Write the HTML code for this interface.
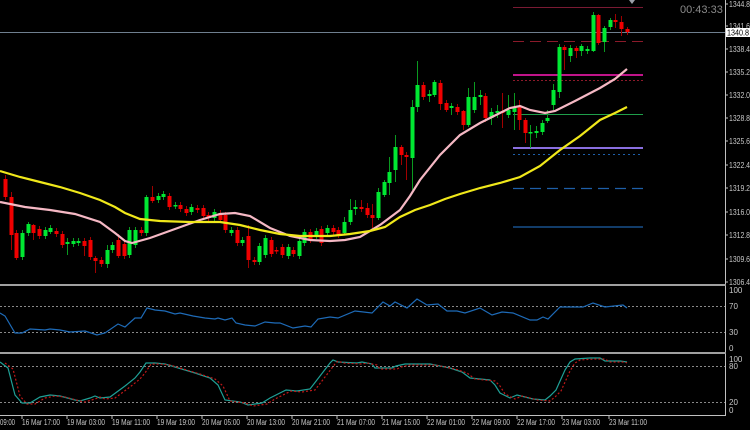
<!DOCTYPE html>
<html><head><meta charset="utf-8"><style>
html,body{margin:0;padding:0;background:#000;}
svg{display:block;font-family:"Liberation Sans",sans-serif;}
</style></head><body>
<svg id="s" width="750" height="430" viewBox="0 0 750 430" xmlns="http://www.w3.org/2000/svg">
<rect width="750" height="430" fill="#000"/>
<line x1="0" y1="32.5" x2="725" y2="32.5" stroke="#6f7f8f" stroke-width="1"/>
<line x1="513" y1="7.5" x2="643" y2="7.5" stroke="#7a1a33" stroke-width="1"/>
<line x1="513" y1="41.5" x2="643" y2="41.5" stroke="#8b1a2a" stroke-width="1" stroke-dasharray="11,6"/>
<line x1="513" y1="75" x2="643" y2="75" stroke="#c0148a" stroke-width="2"/>
<line x1="513" y1="80.5" x2="643" y2="80.5" stroke="#8b1a2a" stroke-width="1" stroke-dasharray="2,2"/>
<line x1="513" y1="114.5" x2="643" y2="114.5" stroke="#1f9e4a" stroke-width="1"/>
<line x1="513" y1="148" x2="643" y2="148" stroke="#8a6fe0" stroke-width="2"/>
<line x1="513" y1="154.5" x2="643" y2="154.5" stroke="#1e5fa8" stroke-width="1" stroke-dasharray="2,3"/>
<line x1="513" y1="188.5" x2="643" y2="188.5" stroke="#1e5fa8" stroke-width="1.3" stroke-dasharray="11,6"/>
<line x1="513" y1="227" x2="643" y2="227" stroke="#1e5fa8" stroke-width="1.3"/>
<g id="candles"></g>
<polyline fill="none" stroke="#f5b8c4" stroke-width="2.2" points="0,202 25,207 50,210 75,214 100,222 115,233 125,241 132,243 150,238 175,229 200,220 220,214 235,213 250,216 270,228 290,236 310,240 330,241 345,240 360,237 380,225 400,210 410,196 420,180 440,155 460,135 480,123 500,113 510,108 520,106 530,110 545,113 555,111 575,101 600,88 615,79 627,69"/>
<polyline fill="none" stroke="#f0e81a" stroke-width="2.2" points="0,171 20,177 40,182 60,187 80,193 100,200 115,207 125,213 140,219 160,221 190,222 220,222 240,225 260,230 280,234 300,236 330,236 350,234 370,231 385,227 400,217 415,210 430,205 445,199 460,194 480,188 500,183 520,177 540,166 560,150 580,136 600,120 615,113 627,107"/>
<line x1="725.5" y1="0" x2="725.5" y2="415" stroke="#c0c0c0" stroke-width="1"/>
<g fill="#c8c8c8" font-size="8" lengthAdjust="spacingAndGlyphs">
<text x="729" y="7" textLength="21" lengthAdjust="spacingAndGlyphs">1344.8</text>
<text x="729" y="29" textLength="21" lengthAdjust="spacingAndGlyphs">1341.6</text>
<text x="729" y="52" textLength="21" lengthAdjust="spacingAndGlyphs">1338.4</text>
<text x="729" y="75" textLength="21" lengthAdjust="spacingAndGlyphs">1335.2</text>
<text x="729" y="98" textLength="21" lengthAdjust="spacingAndGlyphs">1332.0</text>
<text x="729" y="121" textLength="21" lengthAdjust="spacingAndGlyphs">1328.8</text>
<text x="729" y="144" textLength="21" lengthAdjust="spacingAndGlyphs">1325.6</text>
<text x="729" y="168" textLength="21" lengthAdjust="spacingAndGlyphs">1322.4</text>
<text x="729" y="191" textLength="21" lengthAdjust="spacingAndGlyphs">1319.2</text>
<text x="729" y="215" textLength="21" lengthAdjust="spacingAndGlyphs">1316.0</text>
<text x="729" y="238" textLength="21" lengthAdjust="spacingAndGlyphs">1312.8</text>
<text x="729" y="262" textLength="21" lengthAdjust="spacingAndGlyphs">1309.6</text>
<text x="729" y="285" textLength="21" lengthAdjust="spacingAndGlyphs">1306.4</text>
</g>
<rect x="726" y="28" width="24" height="9" fill="#fff"/>
<text x="727" y="35.5" font-size="8" fill="#000" textLength="22" lengthAdjust="spacingAndGlyphs">1340.8</text>
<g stroke="#c0c0c0"><line x1="725" y1="4" x2="728" y2="4"/><line x1="725" y1="26" x2="728" y2="26"/><line x1="725" y1="49" x2="728" y2="49"/><line x1="725" y1="72" x2="728" y2="72"/><line x1="725" y1="95" x2="728" y2="95"/><line x1="725" y1="118" x2="728" y2="118"/><line x1="725" y1="141" x2="728" y2="141"/><line x1="725" y1="165" x2="728" y2="165"/><line x1="725" y1="188" x2="728" y2="188"/><line x1="725" y1="212" x2="728" y2="212"/><line x1="725" y1="235" x2="728" y2="235"/><line x1="725" y1="259" x2="728" y2="259"/><line x1="725" y1="282" x2="728" y2="282"/></g>
<text x="680" y="13" font-size="11" fill="#8a8a8a">00:43:33</text>
<polygon points="629,0 635,0 632,4" fill="#9aa0a8"/>
<rect x="0" y="284" width="726" height="2" fill="#a0a0a0"/>
<rect x="0" y="352" width="726" height="2" fill="#a0a0a0"/>
<line x1="0" y1="415.5" x2="726" y2="415.5" stroke="#c0c0c0"/>
<g stroke="#888" stroke-width="1" stroke-dasharray="2,2">
<line x1="0" y1="306.5" x2="725" y2="306.5"/><line x1="0" y1="332.5" x2="725" y2="332.5"/>
<line x1="0" y1="366.5" x2="725" y2="366.5"/><line x1="0" y1="402.5" x2="725" y2="402.5"/>
</g>
<polyline fill="none" stroke="#1e6bb8" stroke-width="1.2" points="0,313 5,316 15,333 22,333 30,329 45,330 50,329 60,330 70,332 85,331 97,335 105,333 118,324 125,327 135,318 141,318 147,308 155,310 165,311 175,314 180,313 193,316 205,318 215,319 218,318 225,320 232,318 236,323 245,325 255,326 265,322 275,323 280,323 293,328 305,326 311,327 318,319 330,317 338,318 355,311 372,313 383,302 390,306 395,302 407,308 417,299 427,305 438,304 447,311 457,311 465,313 480,308 492,315 502,312 513,313 530,320 537,320 543,317 548,319 560,307 583,307 593,303 605,307 623,305 627,308"/>
<g fill="#c8c8c8" font-size="8">
<text x="729" y="293">100</text><text x="729" y="309">70</text><text x="729" y="335">30</text><text x="729" y="351">0</text>
<text x="729" y="362">100</text><text x="729" y="369">80</text><text x="729" y="405">20</text><text x="729" y="413">0</text>
</g>
<polyline fill="none" stroke="#1fa096" stroke-width="1.2" points="0,362 8,368 15,395 22,403 30,403 40,397 50,395 60,396 75,400 80,401 90,398 95,396 100,398 110,397 125,386 135,378 140,372 146,363 155,363 165,364 185,370 195,373 210,378 218,385 225,400 240,402 248,405 255,404 262,403 270,398 286,390 297,391 310,389 330,363 333,360 338,362 357,363 362,362 372,364 375,368 392,368 396,366 405,364 430,364 450,368 462,372 470,378 490,380 495,385 500,393 510,398 517,395 533,399 545,400 550,396 556,390 565,370 570,362 575,359 590,358 600,358 605,361 620,361 627,362"/>
<polyline fill="none" stroke="#c01818" stroke-width="1.2" stroke-dasharray="2,2" transform="translate(5,1)" points="0,362 8,368 15,395 22,403 30,403 40,397 50,395 60,396 75,400 80,401 90,398 95,396 100,398 110,397 125,386 135,378 140,372 146,363 155,363 165,364 185,370 195,373 210,378 218,385 225,400 240,402 248,405 255,404 262,403 270,398 286,390 297,391 310,389 330,363 333,360 338,362 357,363 362,362 372,364 375,368 392,368 396,366 405,364 430,364 450,368 462,372 470,378 490,380 495,385 500,393 510,398 517,395 533,399 545,400 550,396 556,390 565,370 570,362 575,359 590,358 600,358 605,361 620,361 622,362"/>
<g stroke="#c0c0c0"><line x1="22" y1="415" x2="22" y2="419"/><line x1="67" y1="415" x2="67" y2="419"/><line x1="112" y1="415" x2="112" y2="419"/><line x1="157" y1="415" x2="157" y2="419"/><line x1="202" y1="415" x2="202" y2="419"/><line x1="247" y1="415" x2="247" y2="419"/><line x1="292" y1="415" x2="292" y2="419"/><line x1="337" y1="415" x2="337" y2="419"/><line x1="382" y1="415" x2="382" y2="419"/><line x1="427" y1="415" x2="427" y2="419"/><line x1="472" y1="415" x2="472" y2="419"/><line x1="517" y1="415" x2="517" y2="419"/><line x1="562" y1="415" x2="562" y2="419"/><line x1="609" y1="415" x2="609" y2="419"/></g>
<g fill="#c8c8c8" font-size="8">
<text x="0" y="425" textLength="15" lengthAdjust="spacingAndGlyphs">09:00</text>
<text x="22" y="425" textLength="38" lengthAdjust="spacingAndGlyphs">16 Mar 17:00</text><text x="67" y="425" textLength="38" lengthAdjust="spacingAndGlyphs">19 Mar 03:00</text><text x="112" y="425" textLength="38" lengthAdjust="spacingAndGlyphs">19 Mar 11:00</text><text x="157" y="425" textLength="38" lengthAdjust="spacingAndGlyphs">19 Mar 19:00</text><text x="202" y="425" textLength="38" lengthAdjust="spacingAndGlyphs">20 Mar 05:00</text><text x="247" y="425" textLength="38" lengthAdjust="spacingAndGlyphs">20 Mar 13:00</text><text x="292" y="425" textLength="38" lengthAdjust="spacingAndGlyphs">20 Mar 21:00</text><text x="337" y="425" textLength="38" lengthAdjust="spacingAndGlyphs">21 Mar 07:00</text><text x="382" y="425" textLength="38" lengthAdjust="spacingAndGlyphs">21 Mar 15:00</text><text x="427" y="425" textLength="38" lengthAdjust="spacingAndGlyphs">22 Mar 01:00</text><text x="472" y="425" textLength="38" lengthAdjust="spacingAndGlyphs">22 Mar 09:00</text><text x="517" y="425" textLength="38" lengthAdjust="spacingAndGlyphs">22 Mar 17:00</text><text x="562" y="425" textLength="38" lengthAdjust="spacingAndGlyphs">23 Mar 03:00</text><text x="609" y="425" textLength="38" lengthAdjust="spacingAndGlyphs">23 Mar 11:00</text>
</g>
</svg>
<script>
var d=[
["r",179,197,175,200],["r",197,235,192,250],["r",233,258,230,260],["g",233,257,230,260],["g",224,233,222,236],["r",225,233,224,240],["r",229,236],["g",230,236],["g",228,232,225,234],["r",231,234],
["r",234,245],["g",242,244,238,255],["g",241,244],["g",241,243],["r",241,246,238,256],["r",240,257],["r",258,261,256,273],["r",260,264],["g",250,264,245,268],["g",245,250],
["r",240,256,234,258],["r",244,256],["g",230,255],["g",230,245],["r",230,233],["g",197,233,195,236],["r",197,201,186,203],["g",196,200],["g",194,197],["r",196,207],
["g",205,206],["r",205,209],["r",209,213],["g",207,212],["r",208,210],["r",208,216],["r",215,218],["g",212,218],["r",213,220],["r",215,230],
["g",230,233],["r",230,243],["g",240,243],["r",236,260,225,268],["r",260,262],["g",246,262],["g",238,255],["r",240,254],["r",250,251],["r",247,255],
["g",247,256],["r",250,254],["g",241,256],["g",232,243],["r",232,240],["g",231,236],["r",229,243],["g",228,233],["r",228,232],["r",230,235],
["g",222,233,217,235],["g",210,222,199,225],["g",207,209,200,215],["r",207,209,200,212],["r",208,215,203,218],["r",215,218,204,228],["g",192,218,188,220],["g",182,195,180,197],["g",172,183,157,195],["g",147,170,135,182],
["r",147,155,145,165],["r",155,157,152,180],["g",107,158,100,190],["g",85,107,61,112],["r",85,97],["g",94,96,90,102],["g",82,95,80,97],["r",83,104,80,110],["r",103,110,100,112],["g",106,108,103,115],
["r",107,112],["r",111,125,110,130],["g",97,125,88,127],["g",97,110,82,113],["g",95,97,90,105],["r",96,118,93,122],["g",112,118,108,125],["g",111,113,105,118],["r",111,113,93,128],["g",110,115,95,118],
["g",107,112,93,130],["r",106,120,100,130],["r",120,133,118,143],["g",132,133,125,148],["g",131,133,126,138],["g",123,132,120,135],["g",118,121,110,123],["g",90,105,84,110],["g",47,92,44,98],["r",47,50,45,70],
["g",48,56,45,62],["r",48,51,46,58],["g",46,51,44,56],["g",49,51,46,54],["g",15,51,12,52],["r",15,43,14,45],["g",28,42,26,52],["g",20,27,18,30],["r",20,22,14,28],["r",22,29,16,36],["r",29,32,27,35]];
var h="";
for(var i=0;i<d.length;i++){var c=d[i],x=Math.round(5+5.65*i),col=c[0]=="g"?"#00e832":"#f00000";
var wt=c[3]||c[1]-3,wb=c[4]||c[2]+3,b=Math.max(c[2]-c[1],1.5);
var wc=c[0]=="g"?"#0a9a20":"#a00000";
h+='<rect x="'+x+'" y="'+wt+'" width="1" height="'+(wb-wt)+'" fill="'+wc+'"/>';
h+='<rect x="'+(x-1.5)+'" y="'+c[1]+'" width="4" height="'+b+'" fill="'+col+'"/>';}
document.getElementById("candles").innerHTML=h;
</script>
</body></html>
